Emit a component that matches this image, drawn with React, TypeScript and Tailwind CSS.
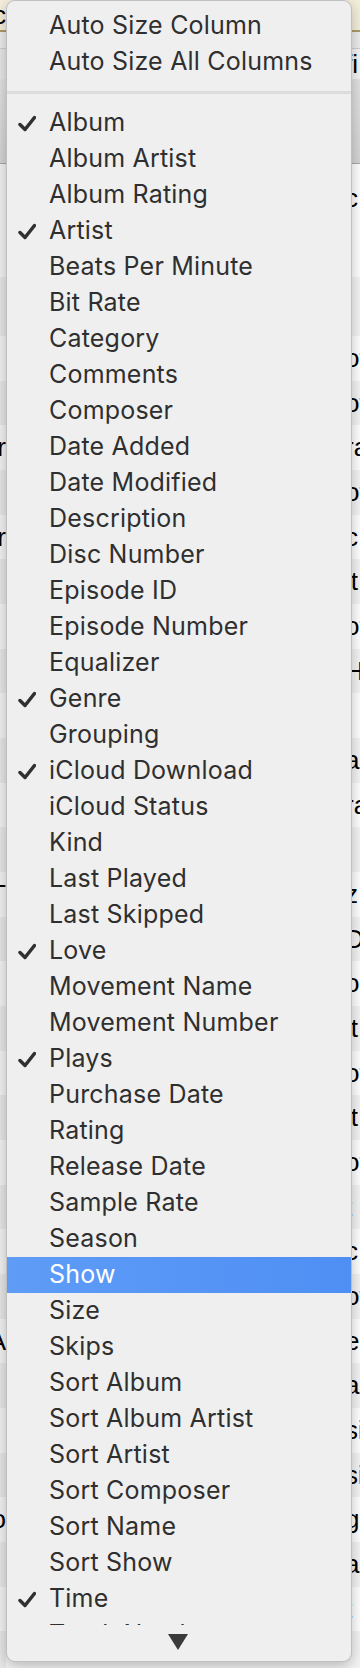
import React from "react";

type Item = { label: string; checked?: boolean; active?: boolean };

const items: Item[] = [
  { label: "Album", checked: true },
  { label: "Album Artist" },
  { label: "Album Rating" },
  { label: "Artist", checked: true },
  { label: "Beats Per Minute" },
  { label: "Bit Rate" },
  { label: "Category" },
  { label: "Comments" },
  { label: "Composer" },
  { label: "Date Added" },
  { label: "Date Modified" },
  { label: "Description" },
  { label: "Disc Number" },
  { label: "Episode ID" },
  { label: "Episode Number" },
  { label: "Equalizer" },
  { label: "Genre", checked: true },
  { label: "Grouping" },
  { label: "iCloud Download", checked: true },
  { label: "iCloud Status" },
  { label: "Kind" },
  { label: "Last Played" },
  { label: "Last Skipped" },
  { label: "Love", checked: true },
  { label: "Movement Name" },
  { label: "Movement Number" },
  { label: "Plays", checked: true },
  { label: "Purchase Date" },
  { label: "Rating" },
  { label: "Release Date" },
  { label: "Sample Rate" },
  { label: "Season" },
  { label: "Show", active: true },
  { label: "Size" },
  { label: "Skips" },
  { label: "Sort Album" },
  { label: "Sort Album Artist" },
  { label: "Sort Artist" },
  { label: "Sort Composer" },
  { label: "Sort Name" },
  { label: "Sort Show" },
  { label: "Time", checked: true },
  { label: "Track Number" },
];

// table rows peeking out either side of the menu
const rows: { left?: string; right?: string }[] = [
  { right: "ot" },
  { right: "ot" },
  { left: "er", right: "ra" },
  { right: "ot" },
  { left: "r", right: "c" },
  { right: "it" },
  { right: "ot" },
  { right: "H" },
  {},
  { right: "ar" },
  { right: "ra" },
  {},
  { left: "T", right: "z" },
  { right: "D" },
  { right: "o" },
  { right: "it" },
  { right: "ot" },
  { right: "it" },
  { right: "ot" },
  { right: "t" },
  { right: "c" },
  { right: "ot" },
  { left: "A", right: "e" },
  { right: "ar" },
  { right: "si" },
  { right: "si" },
  { left: "o", right: "g" },
  { right: "a" },
  { right: "t" },
  {},
];

function Check() {
  return (
    <svg viewBox="0 0 18 17" className="w-[18px] h-[17px]" fill="none">
      <path
        d="M2 9.5L7 14.5L16.5 2.5"
        stroke="#303030"
        strokeWidth="3.5"
        strokeLinecap="round"
        strokeLinejoin="round"
      />
    </svg>
  );
}

function BgRow({ left, right, odd, h }: { left?: string; right?: string; odd?: boolean; h: string }) {
  return (
    <div className={`flex items-center ${h} ${odd ? "bg-[#f4f4f4]" : "bg-white"}`}>
      <div className="w-[6px] h-full flex items-center justify-end overflow-hidden bg-black/5">
        {left && <span className="shrink-0 whitespace-nowrap">{left}</span>}
      </div>
      <div className="flex-1" />
      <div className="w-[12px] h-full flex items-center overflow-hidden">
        {right && <span className="shrink-0 whitespace-nowrap ml-[-3px]">{right}</span>}
      </div>
    </div>
  );
}

export default function App() {
  return (
    <div className="relative w-[360px] h-[1668px] overflow-hidden bg-white text-[26px] text-black font-['Liberation_Sans',Arial,sans-serif]">
      {/* window behind the menu */}
      <div className="flex flex-col">
        <div className="h-[32px] bg-[#f4efdc] border-b-2 border-[#ad9a63] flex items-center">
          <div className="w-[6px] h-full flex items-center justify-end overflow-hidden">
            <span className="shrink-0 whitespace-nowrap">nc</span>
          </div>
        </div>
        <div className="h-[17px] bg-[#ececec] border-b border-[#cfcfcf]" />
        <BgRow h="h-[30px]" right="fi" odd />
        <div className="h-[85px] bg-gradient-to-b from-[#e2e2e2] to-[#d4d4d4] border-b border-[#a8a8a8]" />
        <BgRow h="h-[68px]" right="c" />
        <BgRow h="h-[45px]" />
        <BgRow h="h-[59px]" odd />
        {rows.map((r, i) => (
          <BgRow key={i} h="h-[44.68px]" left={r.left} right={r.right} odd={i % 2 === 1} />
        ))}
      </div>

      {/* context menu */}
      <div className="absolute left-[6px] top-0 w-[346px] h-[1662px] rounded-[9px] bg-[#efefef] border border-black/20 shadow-[0_4px_14px_rgba(0,0,0,0.25)] overflow-hidden flex flex-col font-['Inter','Liberation_Sans',sans-serif] text-[25px] tracking-[0.2px] text-[#2f2f2f]">
        <div className="pt-[7px]">
          <div className="h-[36px] flex items-center pl-[42px] whitespace-nowrap">Auto Size Column</div>
          <div className="h-[36px] flex items-center pl-[42px] whitespace-nowrap">Auto Size All Columns</div>
        </div>
        <div className="h-[25px] flex items-center">
          <div className="w-full h-[3px] bg-[#dcdcdc]" />
        </div>
        <div className="h-[1520px] overflow-hidden">
          {items.map((it) => (
            <div
              key={it.label}
              className={`h-[36px] flex items-center whitespace-nowrap ${
                it.active ? "bg-gradient-to-r from-[#5e9cf7] to-[#4f8ff4] text-white" : ""
              }`}
            >
              <div className="w-[42px] flex justify-end pr-[13px]">{it.checked && <Check />}</div>
              <span>{it.label}</span>
            </div>
          ))}
        </div>
        <div className="flex-1 flex items-start justify-center pt-[9px]">
          <svg viewBox="0 0 20 16" className="w-[20px] h-[16px] ml-[-2px]">
            <path d="M0 0H20L10 16Z" fill="#3a3a3a" />
          </svg>
        </div>
      </div>
    </div>
  );
}
